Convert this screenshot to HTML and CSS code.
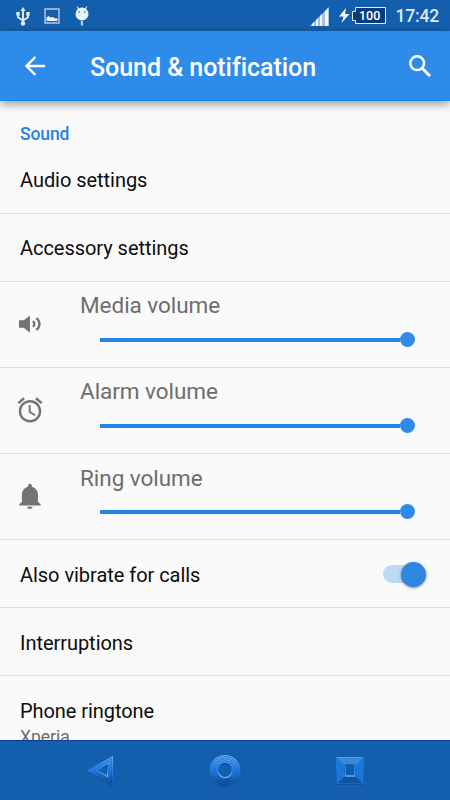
FILE: index.html
```html
<!DOCTYPE html>
<html lang="en">
<head>
<meta charset="utf-8">
<title>Sound &amp; notification</title>
<link rel="stylesheet" href="styles.css">
</head>
<body>
<div class="phone">
  <div class="status">
    <div class="status-left">
      <svg class="usb" width="14" height="20" viewBox="0 0 14 20"><path d="M7 3v13M2 7v3.2l4.500 3M12 7v3.2l-4.500 3" fill="none" stroke="#e3ebf6" stroke-width="1.900"/><path d="M7 0l2.600 4H4.400zM0.300 5h3.400v3.500H.3zM10.300 5h3.400v3.500h-3.400z" fill="#e3ebf6"/><circle cx="7" cy="16.500" r="2.200" fill="#e3ebf6"/></svg>
      <svg class="photo" width="16" height="16" viewBox="0 0 16 16"><path d="M1 1h14v14H1z" fill="none" stroke="#b7cae4" stroke-width="1.400"/><path d="M2.500 13V9.500L4.500 8l2 1.500L9 9l2 1.500 2.500-.3V13z" fill="#e8f0fa"/></svg>
      <svg class="droid" width="14" height="20" viewBox="0 0 14 20"><path d="M2 0l2 2.200Q7 1 10 2.200L12 0l.4.500-1.300 2.600Q13.500 5 13.500 8c0 3.500-3 6.500-6.500 6.500S.5 11.500.5 8Q.5 5 2.900 3.100L1.600.5z" fill="#e8f0fa"/><path d="M5.800 15h2.200v4.500H5.800z" fill="#b7cae4"/><circle cx="4.300" cy="6" r=".8" fill="#145fad"/><circle cx="9.700" cy="6" r=".8" fill="#145fad"/></svg>
    </div>
    <div class="status-right">
      <svg class="signal" width="19" height="19" viewBox="0 0 19 19"><path d="M0 19L19 0v19z" fill="#a9bfe2"/><path d="M2 17l2-2v4H2zM6 13l2-2v8H6zM10 9l2-2v12h-2zM15 4l3-3v18h-3z" fill="#f4f8fd"/></svg>
      <svg class="bolt" width="11" height="15" viewBox="0 0 11 15"><path d="M7 0L0 8.500h4.500L2.500 15 10.500 6H6z" fill="#fff"/></svg>
      <div class="battery"><svg width="34" height="18" viewBox="0 0 34 18"><path d="M3.500.5h30v16h-30v-3h-3v-9h3z" fill="#083c7c" stroke="#e3ebf6" stroke-width="1"/></svg><span class="charge">100</span></div>
      <span class="clock">17:42</span>
    </div>
  </div>

  <header class="toolbar">
    <svg class="back" width="20" height="20" viewBox="0 0 20 20"><path d="M20 10H1.800M10.400 1L1.500 10l8.900 9" fill="none" stroke="#fff" stroke-width="2.400"/></svg>
    <h1>Sound &amp; notification</h1>
    <svg class="search" width="22" height="22" viewBox="0 0 22 22"><circle cx="8.200" cy="8.200" r="6.900" fill="none" stroke="#fff" stroke-width="2.500"/><path d="M13 13l8 8" stroke="#fff" stroke-width="3"/></svg>
  </header>

  <main class="list">
    <h2>Sound</h2>
    <div class="row">Audio settings</div>
    <div class="row">Accessory settings</div>
    <div class="row volume">
      <svg class="icon" width="30" height="30" viewBox="0 0 24 24"><path d="M3 8.500v7h4l5 4.500V4L7 8.500z" transform="translate(.3 1.700) scale(.97 .86)" fill="#737373"/><path d="M14.200 10c1.800.6 1.800 3.400 0 4M17 7.300c3.400 2.200 3.400 7.200 0 9.400" fill="none" stroke="#737373" stroke-width="1.900"/></svg>
      <div class="control"><span class="label">Media volume</span><div class="slider"><i class="thumb"></i></div></div>
    </div>
    <div class="row volume">
      <svg class="icon" width="30" height="30" viewBox="0 0 24 24"><path d="M22 5.720l-4.600-3.860-1.290 1.530 4.600 3.860L22 5.720zM7.880 3.390L6.600 1.860 2 5.710l1.290 1.530 4.590-3.850zM12.500 8H11v6l4.750 2.850.75-1.230-4-2.370V8zM12 4c-4.970 0-9 4.030-9 9s4.020 9 9 9a9 9 0 0 0 0-18zm0 16c-3.870 0-7-3.130-7-7s3.130-7 7-7 7 3.130 7 7-3.130 7-7 7z" fill="#737373"/></svg>
      <div class="control"><span class="label">Alarm volume</span><div class="slider"><i class="thumb"></i></div></div>
    </div>
    <div class="row volume ring">
      <svg class="icon" width="30" height="30" viewBox="0 0 24 24"><path d="M9.700 20.600h4.300c0 1.200-1 1.700-2.100 1.700s-2.200-.5-2.200-1.700zM18.400 16.800V11c0-3.200-1.900-5.600-4.900-6.400V3.800a1.550 1.550 0 0 0-3.100 0v.8C7.400 5.400 5.500 7.800 5.500 11v5.800L3.400 18.500v1h17.100v-1z" fill="#737373"/></svg>
      <div class="control"><span class="label">Ring volume</span><div class="slider"><i class="thumb"></i></div></div>
    </div>
    <div class="row vibrate">Also vibrate for calls<div class="switch"><i class="knob"></i></div></div>
    <div class="row">Interruptions</div>
    <div class="ringtone"><div class="name">Phone ringtone</div><div class="value">Xperia</div></div>
  </main>

  <nav class="navbar">
    <svg width="32" height="36" viewBox="0 0 32 36">
      <defs>
        <linearGradient id="g" x1="0" y1="0" x2="0" y2="1"><stop offset="0" stop-color="#6aaef3"/><stop offset=".45" stop-color="#2583e8"/><stop offset="1" stop-color="#0f55a6"/></linearGradient>
        <linearGradient id="r" x1="0" y1="0" x2="0" y2="1"><stop offset="0" stop-color="#1f6fcb"/><stop offset=".5" stop-color="#1a6bc8"/><stop offset="1" stop-color="#083f80"/></linearGradient>
        <linearGradient id="h" x1="0" y1="0" x2="0" y2="1"><stop offset="0" stop-color="#0a3f80"/><stop offset=".5" stop-color="#2583e8"/><stop offset="1" stop-color="#7bbcff"/></linearGradient>
      </defs>
      <path d="M3 18.500L29 4v30z" fill="#0c4788" opacity=".6"/>
      <path d="M3 17.500L29 3v29.500z" fill="url(#g)"/>
      <path d="M6 17.500L27.500 5.500v24.500zM9 17.500L26 8v19.500z" fill="none" stroke="url(#r)" stroke-width=".8"/>
      <path d="M13.500 17.500L23.500 12v11.500z" fill="#145fad" stroke="url(#h)"/>
    </svg>
    <svg width="34" height="36" viewBox="0 0 34 36">
      <circle cx="17" cy="18.600" r="15.500" fill="#0c4788" opacity=".6"/>
      <circle cx="17" cy="17.500" r="15.500" fill="url(#g)"/>
      <g fill="none" stroke="url(#r)" stroke-width=".9"><circle cx="17" cy="17.500" r="14"/><circle cx="17" cy="17.500" r="11.800"/><circle cx="17" cy="17.500" r="9.600"/></g>
      <circle cx="17" cy="17.500" r="7" fill="#145fad" stroke="url(#h)" stroke-width="1.200"/>
    </svg>
    <svg width="32" height="36" viewBox="0 0 32 36">
      <path d="M2.500 5h27v27h-27z" fill="#0c4788" opacity=".6"/>
      <path d="M2.500 4h27v13.500h-27z" fill="#4f9bed"/>
      <path d="M2.500 31V4L16 17.500 29.500 4v27z" fill="#1b76da"/>
      <path d="M2.500 31L16 17.500 29.500 31z" fill="#1466c0"/>
      <path d="M4.500 6h23M6.500 8h19M8.500 10h15" stroke="#1f6fcb" stroke-width=".9"/>
      <path d="M9 25h14M7 27h18M5 29h22" stroke="#083f80" stroke-width=".9"/>
      <path d="M11.500 12h9v11h-9z" fill="#145fad" stroke="#2583e8"/>
      <path d="M11 12h10" stroke="#0a3f80"/>
      <path d="M11 23h10" stroke="#7bbcff"/>
    </svg>
  </nav>
</div>
</body>
</html>
```

FILE: styles.css
```css
* { box-sizing: border-box; }
body { margin: 0; font-family: Roboto, "Liberation Sans", sans-serif; background: #fafafa; }
.phone { width: 450px; height: 800px; display: flex; flex-direction: column; overflow: hidden; }

.status { flex: none; height: 31px; background: #145fad; display: flex; justify-content: space-between; padding: 0 11px 0 16px; }
.status-left, .status-right { display: flex; align-items: flex-start; }
.usb { margin-top: 7px; }
.photo { margin: 8px 0 0 14px; }
.droid { margin: 6px 0 0 15px; }
.signal { margin: 7px 10px 0 0; }
.bolt { margin: 8px 2px 0 0; }
.battery { display: grid; margin: 7px 10px 0 0; }
.battery > * { grid-area: 1 / 1; }
.charge { font-size: 12.500px; line-height: 17px; font-weight: 500; color: #fff; text-align: center; padding-left: 2px; }
.clock { font-size: 17.500px; line-height: 20px; font-weight: 500; letter-spacing: -0.2px; color: #dfe9f6; margin-top: 6px; }

.toolbar { flex: none; height: 70px; background: #2f8be9; border-bottom: 1px solid #148ae9; display: flex; align-items: center; padding: 0 19px 0 25px; box-shadow: 0 3px 9px rgba(0, 0, 0, .4); z-index: 1; }
.back { margin-top: 1px; }
.toolbar h1 { flex: 1; margin: 4px 0 0 45px; font-size: 25px; line-height: 30px; font-weight: 500; letter-spacing: -0.05px; font-variant-ligatures: common-ligatures; color: #fff; }

.list { flex: 1; min-height: 0; overflow: hidden; }
.list h2 { margin: 0; height: 45px; padding: 22px 20px 0; font-size: 17.500px; line-height: 22px; font-weight: 500; letter-spacing: -0.1px; color: #1e82e6; }
.row { height: 68px; display: flex; align-items: center; padding: 1px 20px 0; border-bottom: 1px solid #dedede; font-size: 20px; letter-spacing: -0.04px; color: #0c0c0c; }
.volume { height: 86px; align-items: flex-start; padding: 0 35px 0 15px; }
.icon { flex: none; margin-top: 27px; }
.control { flex: 1; margin-left: 35px; }
.label { display: block; margin-top: 9px; font-size: 22.500px; line-height: 28px; color: #6d6d6d; }
.slider { height: 15px; margin: 13px 0 0 20px; display: flex; align-items: center; }
.slider::before { content: ""; flex: 1; height: 4px; background: #2584e9; }
.thumb { width: 15px; height: 15px; border-radius: 50%; background: #2f8be9; }
.ring .label { margin-top: 10px; }
.ring .slider { margin-top: 12px; }
.vibrate { justify-content: space-between; padding: 2px 24px 0 20px; }
.switch { width: 43px; height: 18px; border-radius: 9px; background: #bfdaf7; display: flex; justify-content: flex-end; align-items: center; margin-bottom: 1px; }
.knob { width: 25px; height: 25px; border-radius: 50%; background: #2f86e2; box-shadow: 0 1px 3px rgba(0, 0, 0, .45); }
.vibrate + .row { padding-top: 3px; }
.ringtone { padding: 22px 20px 0; }
.name { font-size: 20px; line-height: 26px; letter-spacing: -0.06px; color: #0c0c0c; }
.value { font-size: 17.500px; line-height: 22px; margin-top: 2px; color: #6d6d6d; }

.navbar { flex: none; height: 60px; background: #145fad; border-top: 1px solid #0a3d9a; display: flex; align-items: center; justify-content: space-between; padding: 0 84px; }
```
